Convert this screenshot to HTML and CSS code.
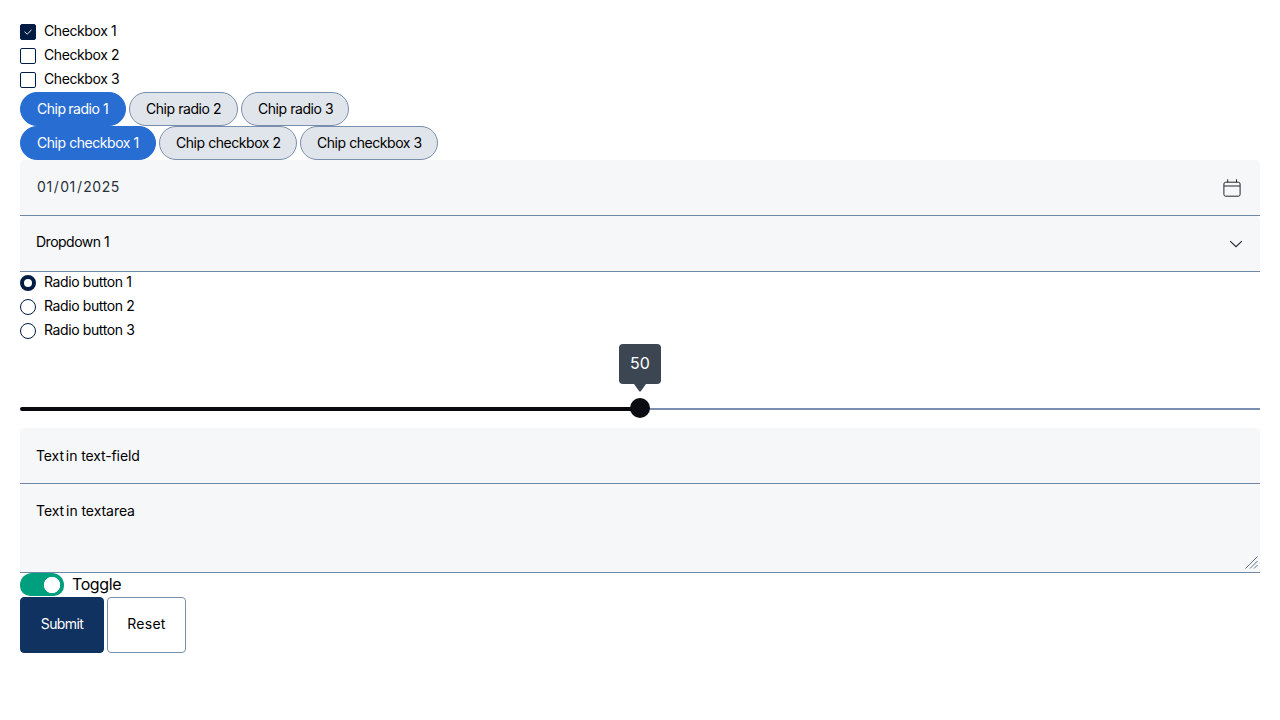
FILE: index.html
```html
<!DOCTYPE html>
<html lang="en">
<head>
<meta charset="utf-8">
<title>Form</title>
<link rel="stylesheet" href="styles.css">
</head>
<body>
<form class="form">
  <div class="options checks">
    <label class="option"><span class="box checked"><svg width="16" height="16" viewBox="0 0 16 16"><path d="M4.5 7.7 7.2 10.2 11.5 5.9"/></svg></span><span>Checkbox 1</span></label>
    <label class="option"><span class="box"></span><span>Checkbox 2</span></label>
    <label class="option"><span class="box"></span><span>Checkbox 3</span></label>
  </div>
  <div class="chips">
    <span class="chip on w106"><span>Chip<i class="space"></i>radio 1</span></span>
    <span class="chip w109"><span>Chip radio 2</span></span>
    <span class="chip w108"><span>Chip radio 3</span></span>
  </div>
  <div class="chips">
    <span class="chip on w136"><span>Chip<i class="space wide"></i>checkbox 1</span></span>
    <span class="chip w138"><span>Chip checkbox 2</span></span>
    <span class="chip w138"><span>Chip checkbox 3</span></span>
  </div>
  <div class="field date"><span>01<i class="slash">/</i>01<i class="slash">/</i>2025</span>
    <svg class="calendar" width="20" height="20" viewBox="0 0 20 20"><rect x="1.9" y="4.2" width="16.2" height="14" rx="1.8"/><path d="M2 8h16M5.7 1.3v2.9M14.5 1.3v2.9"/></svg>
  </div>
  <div class="field select"><span>Dropdown 1</span>
    <svg class="chevron" width="14" height="8" viewBox="0 0 14 8"><path d="M1.2 1.2 7 6.7 12.8 1.2"/></svg>
  </div>
  <div class="options radios">
    <label class="option"><span class="radio selected"></span><span>Radio button 1</span></label>
    <label class="option"><span class="radio"></span><span>Radio button 2</span></label>
    <label class="option"><span class="radio"></span><span>Radio button 3</span></label>
  </div>
  <div class="slider">
    <span class="tooltip">50<svg class="arrow" width="12" height="8" viewBox="0 0 12 8"><path d="M0 0h12L7 7q-1 1.2-2 0z"/></svg></span>
    <div class="track"><span class="filled"></span><span class="thumb"></span><span class="rest"></span></div>
  </div>
  <div class="field text"><span>Text<i class="space"></i>in text-field</span></div>
  <div class="field area"><span>Text<i class="space"></i>in textarea</span>
    <svg class="grip" width="13" height="13" viewBox="0 0 13 13"><path d="M.5 12.5l12-12M5 12.5l7.5-7.5M9 12.5l3.5-3.5"/></svg>
  </div>
  <div class="toggle"><span class="switch"></span><span class="toggle-label">Toggle</span></div>
  <div class="actions"><button class="btn primary" type="button">Submit</button><button class="btn secondary" type="button">Reset</button></div>
</form>
</body>
</html>
```
FILE: styles.css
```css
* { box-sizing: border-box; }
body { margin: 0; background: #fff; color: #000; font: 380 14px/20px Inter, "Liberation Sans", sans-serif; }
.form { padding: 20px 20px 0; }
svg { display: block; fill: none; stroke: #22262c; }
.options { height: 72px; letter-spacing: -.4px; }
.option { display: flex; height: 24px; gap: 8px; }
.option > span:last-child { margin-top: 1px; }
.box { width: 16px; height: 16px; margin-top: 4px; border: 1px solid #001c43; border-radius: 2px; }
.box.checked { background: #001c43; }
.box svg { margin: -1px; stroke: #fff; stroke-width: .9; }
.chips { display: flex; gap: 3px; height: 34px; letter-spacing: -.45px; }
.chip { height: 34px; border: 1px solid #7a8fad; border-radius: 17px; background: #e0e4eb; padding: 6px 0 0 16px; white-space: nowrap; }
.chip.on { background: #286ed2; border-color: #286ed2; color: #fff; }
.w106 { width: 106px; }
.w108 { width: 108px; }
.w109 { width: 109px; }
.w136 { width: 136px; }
.w138 { width: 138px; }
.field { position: relative; display: flex; justify-content: space-between; height: 56px; padding: 17px 16px 0; background: #f5f7f9; border-bottom: 1px solid #7088a6; border-radius: 4px 4px 0 0; }
.date { padding-left: 17px; color: #2c313a; letter-spacing: .55px; }
.slash { margin: 0 .7px 0 1.2px; font-style: normal; }
.calendar { margin: 1px 2px 0 0; }
.select { padding-top: 16px; letter-spacing: -.5px; }
.chevron { margin: 8px 1px 0 0; stroke-width: 1.1; }
.radios { letter-spacing: -.39px; }
.radios .option > span:last-child { margin-top: 0; }
.radio { width: 16px; height: 16px; margin-top: 3px; border: 1px solid #001c43; border-radius: 50%; }
.radio.selected { border-width: 4px; }
.slider { height: 84px; display: flex; flex-direction: column; align-items: center; }
.tooltip { position: relative; width: 42px; height: 40px; border-radius: 4px; background: #3c4653; color: #fff; font-size: 16px; line-height: 39px; text-align: center; }
.arrow { position: absolute; left: 15px; top: 40px; fill: #3c4653; stroke: none; }
.track { display: flex; align-items: center; width: 100%; height: 20px; margin-top: 14px; }
.filled { flex: 1; height: 4px; margin-top: 2px; border-radius: 2px 0 0 2px; background: #08080e; }
.thumb { width: 20px; height: 20px; margin: 0 -1px; z-index: 1; border-radius: 50%; background: #0b0d12; }
.rest { flex: 1; height: 2px; margin-top: 2px; background: #7a8ead; }
.text { padding-top: 18px; letter-spacing: -.11px; }
.area { height: 89px; letter-spacing: -.06px; }
.space { display: inline-block; width: 2px; }
.chip .space { width: 2.5px; }
.chip .space.wide { width: 3.5px; }
.grip { position: absolute; right: 2px; bottom: 3px; stroke: #66748a; }
.toggle { display: flex; height: 24px; gap: 8px; overflow: hidden; font-size: 16px; line-height: 23px; letter-spacing: -.4px; }
.switch { width: 44px; height: 23px; border-radius: 12px 12px 10px 10px; background: radial-gradient(circle at 32px 12px, #fff 7.8px, #00a07e 8.5px); }
.actions { display: flex; gap: 3px; }
.btn { height: 56px; padding: 0 0 2px; border: 1px solid #7a8fad; border-radius: 4px; background: #fff; color: inherit; font: inherit; }
.btn.primary { width: 84px; background: #103260; border-color: #103260; color: #fff; letter-spacing: -.6px; }
.btn.secondary { width: 79px; letter-spacing: .25px; }
```
